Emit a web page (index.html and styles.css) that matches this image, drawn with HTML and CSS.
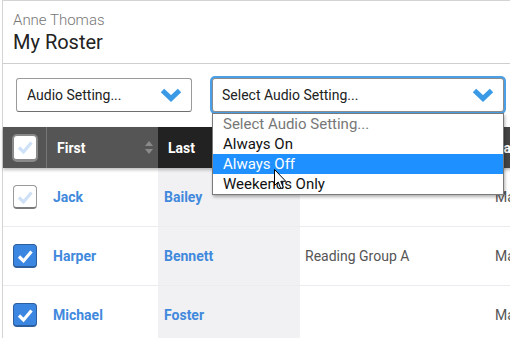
FILE: index.html
```html
<html>
<head>
  <title>My Roster</title>
  <link rel="stylesheet" href="styles.css">
</head>
<body>

<div class="page">

  <!-- page header -->
  <div class="page-header">
    <div class="user-name">Anne Thomas</div>
    <div class="page-title">My Roster</div>
  </div>

  <!-- toolbar with the two audio selects -->
  <div class="toolbar">
    <div class="select select-small">
      <span>Audio Setting...</span>
      <svg class="chevron" width="22" height="14" viewBox="0 0 22 14"><polyline points="2.5,2.5 11,10.5 19.5,2.5" /></svg>
    </div>

    <div class="select-wrap">
      <div class="select select-open">
        <span>Select Audio Setting...</span>
        <svg class="chevron" width="22" height="14" viewBox="0 0 22 14"><polyline points="2.5,2.5 11,10.5 19.5,2.5" /></svg>
      </div>
      <ul class="options">
        <li class="option-placeholder">Select Audio Setting...</li>
        <li>Always On</li>
        <li class="option-active">Always Off</li>
        <li>Weekends Only</li>
      </ul>
      <svg class="cursor" width="13" height="21" viewBox="0 0 13 21">
        <path d="M0.5 0.5 L0.5 16.5 L4.2 13 L6.8 19.5 L9.3 18.4 L6.8 12.3 L11.8 12.3 Z" />
      </svg>
    </div>
  </div>

  <!-- roster table -->
  <div class="roster">
    <div class="roster-head">
      <div class="cell cell-check">
        <div class="check check-head">
          <svg width="22" height="22" viewBox="0 0 22 22"><polyline points="5,11.5 9.5,16 17.5,6.5" /></svg>
        </div>
      </div>
      <div class="cell cell-first">
        First
        <svg class="sort" width="8" height="14" viewBox="0 0 8 14"><path d="M4 0 L8 5 L0 5 Z M0 8 L8 8 L4 13 Z" /></svg>
      </div>
      <div class="cell cell-last">Last</div>
      <div class="cell cell-group">Group</div>
      <div class="cell cell-more">Last Active</div>
    </div>

    <div class="roster-row">
      <div class="cell cell-check">
        <div class="check">
          <svg width="22" height="22" viewBox="0 0 22 22"><polyline points="5,11.5 9.5,16 17.5,6.5" /></svg>
        </div>
      </div>
      <div class="cell cell-first">Jack</div>
      <div class="cell cell-last">Bailey</div>
      <div class="cell cell-group"></div>
      <div class="cell cell-more">Ma</div>
    </div>

    <div class="roster-row">
      <div class="cell cell-check">
        <div class="check check-on">
          <svg width="22" height="22" viewBox="0 0 22 22"><polyline points="5,11.5 9.5,16 17.5,6.5" /></svg>
        </div>
      </div>
      <div class="cell cell-first">Harper</div>
      <div class="cell cell-last">Bennett</div>
      <div class="cell cell-group">Reading Group A</div>
      <div class="cell cell-more">Ma</div>
    </div>

    <div class="roster-row">
      <div class="cell cell-check">
        <div class="check check-on">
          <svg width="22" height="22" viewBox="0 0 22 22"><polyline points="5,11.5 9.5,16 17.5,6.5" /></svg>
        </div>
      </div>
      <div class="cell cell-first">Michael</div>
      <div class="cell cell-last">Foster</div>
      <div class="cell cell-group"></div>
      <div class="cell cell-more">Ma</div>
    </div>
  </div>

</div>

</body>
</html>
```

FILE: styles.css
```css
/* page frame */
body {
  margin: 0;
  overflow: hidden;
  font-family: Roboto, 'Liberation Sans', sans-serif;
  background-color: #ffffff;
}

.page {
  margin-left: 2px;
  width: 620px;
  border-top: 1px solid #d4d4d4;
  border-left: 1px solid #d4d4d4;
}

/* header */
.page-header {
  padding: 10px 10px 0;
  height: 52px;
  border-bottom: 1px solid #cfcfcf;
}

.user-name {
  font-size: 15px;
  font-weight: 300;
  color: #777777;
  line-height: 18px;
}

.page-title {
  font-size: 20px;
  color: #222222;
  line-height: 26px;
}

/* toolbar */
.toolbar {
  display: flex;
  align-items: flex-start;
  gap: 20px;
  height: 63px;
  padding: 14px 0 0 13px;
  box-sizing: border-box;
}

.select {
  display: flex;
  align-items: center;
  justify-content: space-between;
  height: 34px;
  box-sizing: border-box;
  padding: 0 9px 0 10px;
  border: 1px solid #9a9a9a;
  border-bottom-color: #6f6f6f;
  border-radius: 3px;
  font-size: 14px;
  color: #222222;
  background-color: #ffffff;
}

.select-small {
  width: 176px;
}

.select-wrap {
  position: relative;
}

.select-open {
  width: 292px;
  padding-left: 9px;
  border-color: #8c8c8c;
  box-shadow: 0 0 0 2px #4a9fe6;
}

.chevron polyline {
  fill: none;
  stroke: #3a9ae6;
  stroke-width: 5;
}

/* open dropdown list */
.options {
  position: absolute;
  left: 0;
  top: 35px;
  width: 292px;
  margin: 0;
  padding: 0;
  list-style: none;
  box-sizing: border-box;
  border: 1px solid #7a7a7a;
  background-color: #ffffff;
  box-shadow: 1px 2px 3px rgba(0, 0, 0, 0.3);
  z-index: 5;
}

.options li {
  height: 20px;
  line-height: 20px;
  padding-left: 10px;
  font-size: 15px;
  color: #111111;
}

.options .option-placeholder {
  color: #777777;
}

.options .option-active {
  background-color: #1e90ff;
  color: #ffffff;
}

.cursor {
  position: absolute;
  left: 62px;
  top: 91px;
  z-index: 6;
}

.cursor path {
  fill: #ffffff;
  stroke: #000000;
  stroke-width: 1;
}

/* roster table */
.roster-head,
.roster-row {
  display: grid;
  grid-template-columns: 44px 111px 142px 190px 1fr;
}

.roster-head {
  height: 41px;
  position: relative;
  z-index: 2;
  box-shadow: 0 2px 3px rgba(0, 0, 0, 0.25);
}

.roster-row {
  height: 59px;
  border-bottom: 1px solid #ebebf0;
  box-sizing: border-box;
}

.cell {
  display: flex;
  align-items: center;
  font-size: 14px;
}

.roster-head .cell {
  background-color: #555555;
  color: #ffffff;
  font-weight: bold;
  padding-left: 10px;
}

.roster-head .cell-check {
  padding-left: 9px;
  border-right: 1px solid #777777;
}

.roster-head .cell-first {
  justify-content: space-between;
  padding-right: 5px;
}

.roster-head .cell-last {
  background-color: #222222;
}

.roster-head .cell-more {
  background-color: #444444;
  padding-left: 6px;
}

.sort path {
  fill: #8a8a8a;
}

.roster-row .cell-check {
  padding-left: 10px;
}

.roster-row .cell-first,
.roster-row .cell-last {
  color: #4189dd;
  font-weight: bold;
  padding-left: 6px;
}

.roster-row .cell-last {
  background-color: #f1f1f3;
}

.roster-row .cell-group,
.roster-row .cell-more {
  color: #555555;
  padding-left: 5px;
}

/* checkboxes */
.check {
  width: 24px;
  height: 24px;
  box-sizing: border-box;
  border: 1px solid #9a9a9a;
  border-bottom: 2px solid #7a7a7a;
  border-radius: 4px;
  background-color: #ffffff;
  display: flex;
  align-items: center;
  justify-content: center;
}

.check polyline {
  fill: none;
  stroke: #cfe1f7;
  stroke-width: 3.2;
}

.check-head {
  width: 26px;
  height: 28px;
  border: 2px solid #8a8a8a;
  border-bottom-width: 3px;
  border-radius: 5px;
}

.check-on {
  background-color: #3b86e0;
  border-color: #2d5f9e;
}

.check-on polyline {
  stroke: #ffffff;
}
```
